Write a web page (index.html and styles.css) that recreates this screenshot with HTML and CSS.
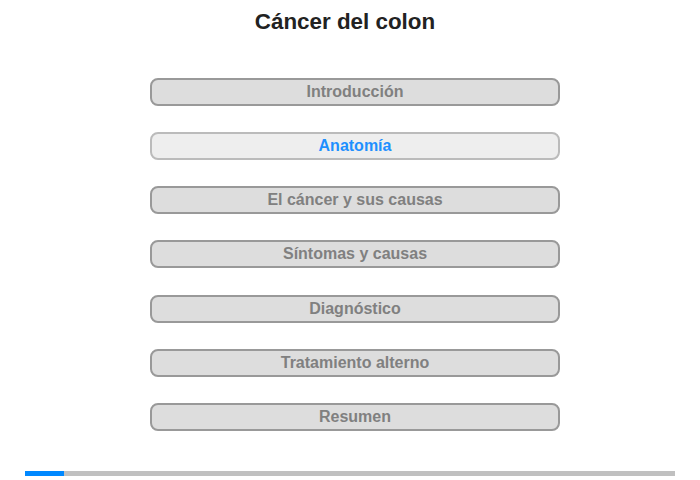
FILE: index.html
```html
<!DOCTYPE html>
<html lang="es">
<head>
    <meta charset="UTF-8">
    <meta name="viewport" content="width=device-width, initial-scale=1.0">
    <title>Cáncer del colon</title>
    <link rel="stylesheet" href="styles.css">
</head>
<body>
    <h1>Cáncer del colon</h1>

    <div class="menu">
        <button class="item">Introducción</button>
        <button class="item current">Anatomía</button>
        <button class="item">El cáncer y sus causas</button>
        <button class="item">Síntomas y causas</button>
        <button class="item">Diagnóstico</button>
        <button class="item">Tratamiento alterno</button>
        <button class="item">Resumen</button>
    </div>

    <div class="progress">
        <div class="progress-fill" style="width: 6%"></div>
    </div>
</body>
</html>
```

FILE: styles.css
```css
body {
    font-family: "Liberation Sans", Arial, sans-serif;
    background-color: #fff;
    margin: 0;
    padding: 0 25px;
    height: 480px;
    display: flex;
    flex-direction: column;
    align-items: center;
}
h1 {
    font-size: 22.4px;
    font-weight: bold;
    color: #222;
    margin: 9px 10px 0 0;
    line-height: 26px;
}
.menu {
    margin: 43px 0 0 10px;
    display: flex;
    flex-direction: column;
    gap: 26.17px;
}
.item {
    width: 410px;
    height: 28px;
    padding: 0;
    border: 2px solid #999;
    border-radius: 8px;
    background-color: #ddd;
    color: #808080;
    font-family: inherit;
    font-size: 16px;
    font-weight: bold;
    cursor: pointer;
}
.item.current {
    background-color: #eee;
    border-color: #bbb;
    color: #1e90ff;
}
.progress {
    margin-top: auto;
    margin-bottom: 4px;
    align-self: stretch;
    height: 5px;
    background-color: #c0c0c0;
}
.progress-fill {
    height: 100%;
    background-color: #0088ff;
}
```
